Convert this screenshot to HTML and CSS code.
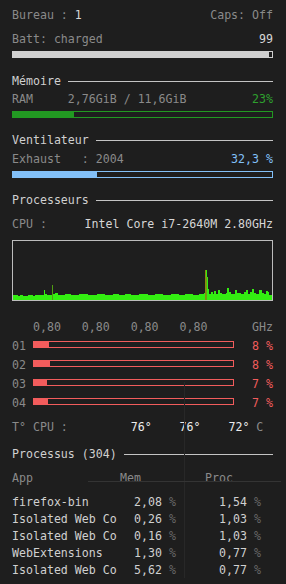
FILE: index.html
```html
<!DOCTYPE html>
<html>
<head>
  <title>Conky</title>
  <link rel="stylesheet" href="styles.css">
</head>
<body>
  <div class="panel">
    <div class="row first">
      <span>Bureau : <b class="val">1</b></span>
      <span>Caps: Off</span>
    </div>
    <div class="row gap6">
      <span>Batt: charged</span>
      <span class="val">99</span>
    </div>
    <div class="bar batt"><div class="fill" style="width: 99%"></div></div>

    <div class="title mem-title">Mémoire</div>
    <div class="row">
      <span>RAM     2,76GiB / 11,6GiB</span>
      <span class="green">23%</span>
    </div>
    <div class="bar ram"><div class="fill" style="width: 23.5%"></div></div>

    <div class="title sec">Ventilateur</div>
    <div class="row gap1">
      <span>Exhaust   : 2004</span>
      <span class="blue">32,3 %</span>
    </div>
    <div class="bar fan"><div class="fill" style="width: 32.3%"></div></div>

    <div class="title sec">Processeurs</div>
    <div class="row gap6">
      <span>CPU :</span>
      <span class="val">Intel Core i7-2640M 2.80GHz</span>
    </div>
    <div class="graph">
      <svg width="259" height="59" viewBox="0 0 259 59">
        <path fill="#33ee11" d="M0 59 V54 H5 V55 H7 V54 H10 V55 H15 V54 H20 V55 H22 V54 H31 V49 H32 V53 H34 V54 H39 V44 H40 V53 H42 V52 H45 V54 H52 V53 H58 V54 H66 V53 H75 V54 H84 V53 H92 V54 H100 V53 H106 V54 H112 V53 H118 V54 H126 V53 H135 V54 H142 V53 H150 V54 H158 V53 H166 V54 H172 V53 H180 V54 H186 V53 H191 V52 H192 V29 H194 V36 H195 V48 H196 V53 H198 V51 H200 V53 H201 V50 H203 V53 H205 V49 H207 V52 H209 V53 H213 V52 H214 V47 H216 V51 H218 V53 H222 V49 H224 V52 H228 V53 H231 V51 H233 V49 H235 V53 H237 V51 H239 V48 H241 V52 H243 V53 H246 V49 H249 V52 H251 V53 H253 V50 H255 V51 H256 V54 H259 V59 Z"/>
        <rect x="39" y="44" width="1" height="15" fill="#4f9c12"/>
        <rect x="192" y="29" width="1" height="30" fill="#8a8c0e"/>
        <rect x="193" y="36" width="1" height="23" fill="#6f9e10"/>
      </svg>
    </div>

    <div class="row freq">
      <span>   0,80   0,80   0,80   0,80</span>
      <span>GHz</span>
    </div>
    <div class="cores">
      <div class="core"><span>01</span><div class="bar red"><div class="fill" style="width: 7.5%"></div></div><span class="pct">8 %</span></div>
      <div class="core"><span>02</span><div class="bar red"><div class="fill" style="width: 8%"></div></div><span class="pct">8 %</span></div>
      <div class="core"><span>03</span><div class="bar red"><div class="fill" style="width: 6.5%"></div></div><span class="pct">7 %</span></div>
      <div class="core"><span>04</span><div class="bar red"><div class="fill" style="width: 7%"></div></div><span class="pct">7 %</span></div>
    </div>
    <div class="row gap6">
      <span>T° CPU :         <b class="temp">76°</b>    <b class="temp">76°</b>    <b class="temp">72°</b> C</span>
    </div>

    <div class="title procs">Processus (304)</div>
    <div class="ptable head">
      <span>App</span>
      <span>Mem</span>
      <span class="proc-h">Proc</span>
    </div>
    <div class="plist">
      <div class="ptable"><span>firefox-bin</span><span class="num">2,08 <i>%</i></span><span class="num">1,54 <i>%</i></span></div>
      <div class="ptable"><span>Isolated Web Co</span><span class="num">0,26 <i>%</i></span><span class="num">1,03 <i>%</i></span></div>
      <div class="ptable"><span>Isolated Web Co</span><span class="num">0,16 <i>%</i></span><span class="num">1,03 <i>%</i></span></div>
      <div class="ptable"><span>WebExtensions</span><span class="num">1,30 <i>%</i></span><span class="num">0,77 <i>%</i></span></div>
      <div class="ptable"><span>Isolated Web Co</span><span class="num">5,62 <i>%</i></span><span class="num">0,77 <i>%</i></span></div>
    </div>
  </div>
</body>
</html>
```
FILE: styles.css
```css
* { margin: 0; padding: 0; box-sizing: border-box; }
body {
  background: #1e1e1e;
  font-family: "DejaVu Sans Mono", "Liberation Mono", monospace;
  font-size: 11.6px;
  line-height: 18px;
  color: #8a8a8a;
}
b, i { font-weight: normal; font-style: normal; }
.panel {
  position: relative;
  width: 286px;
  min-height: 584px;
  padding: 6px 13px 0 12px;
  overflow: hidden;
}
/* faint desktop lines showing through */
.panel::before {
  content: "";
  position: absolute;
  left: 184px;
  top: 382px;
  bottom: 6px;
  width: 1px;
  background: #282828;
}
.panel::after {
  content: "";
  position: absolute;
  left: 88px;
  top: 481px;
  width: 193px;
  height: 1px;
  background: #343434;
}
.row {
  display: flex;
  justify-content: space-between;
  white-space: pre;
}
.val { color: #d6d6d6; }
.green { color: #2ea02e; }
.blue { color: #82c0f8; }
.temp { color: #ececec; }
.gap1 { margin-top: 1px; }
.gap6 { margin-top: 6px; }

.bar {
  height: 7px;
  border: 1px solid;
  margin-top: 3px;
}
.bar .fill { height: 100%; }
.batt { border-color: #d0d0d0; }
.batt .fill { background: #d0d0d0; }
.ram { border-color: #229922; }
.ram .fill { background: #229922; }
.fan { border-color: #82c0f8; }
.fan .fill { background: #82c0f8; }
.red { border-color: #f25c5c; }
.red .fill { background: #f25c5c; }

.title {
  display: flex;
  align-items: center;
  color: #d0d0d0;
}
.title::after {
  content: "";
  flex: 1;
  height: 1px;
  background: #c4c4c4;
  margin-left: 7px;
}
.mem-title { margin-top: 14px; }
.sec { margin-top: 13px; }
.procs { margin-top: 9px; }

.graph {
  margin-top: 7px;
  height: 61px;
  border: 1px solid #bcbcbc;
}
.graph svg { display: block; }

.freq { margin-top: 17px; }
.cores {
  display: flex;
  flex-direction: column;
  gap: 1px;
  margin-top: 1px;
}
.core {
  display: flex;
  align-items: flex-start;
}
.core .bar {
  width: 201px;
  margin: 4px 0 0 7px;
}
.core .pct {
  flex: 1;
  text-align: right;
  color: #f25c5c;
}

.ptable {
  display: grid;
  grid-template-columns: 108px 56px 85px;
  white-space: pre;
  line-height: 17px;
  color: #d0d0d0;
}
.ptable.head {
  margin-top: 6px;
  line-height: 18px;
  color: #8a8a8a;
}
.proc-h { padding-left: 29px; }
.plist { margin-top: 7px; }
.num { text-align: right; }
.num i { color: #666; }
```
